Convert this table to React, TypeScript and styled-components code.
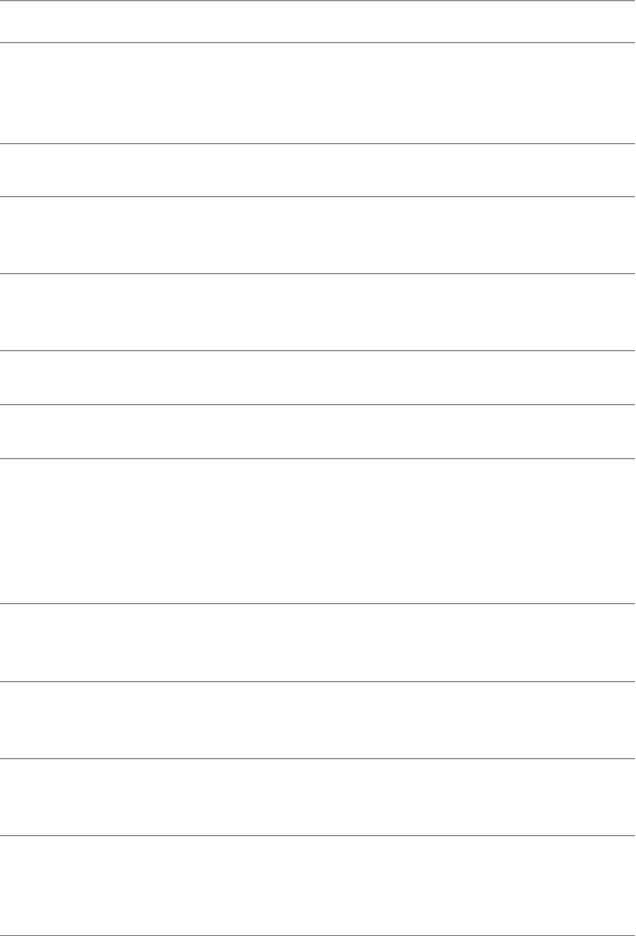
import * as React from "react";
import styled, { createGlobalStyle } from "styled-components";

const Global = createGlobalStyle`
  html, body {
    margin: 0;
    padding: 0;
    background: #ffffff;
    font-family: "Liberation Sans", Arial, sans-serif;
  }
`;

const List = styled.div`
  display: flex;
  flex-direction: column;
  width: 635px;
`;

const Row = styled.div<{ h: number }>`
  box-sizing: border-box;
  height: ${p => p.h}px;
  border-top: 1px solid #8f8f8f;
  box-shadow: inset 0 1px 0 #e4e4e4;
`;

const Rule = styled.div`
  height: 1px;
  background: #8f8f8f;
  box-shadow: 0 1px 0 #e4e4e4;
`;

const rows = [42, 101, 53, 77, 77, 54, 54, 145, 78, 77, 77, 100];

export default function App() {
  return (
    <>
      <Global />
      <List>
        {rows.map((h, i) => (
          <Row key={i} h={h} />
        ))}
        <Rule />
      </List>
    </>
  );
}
